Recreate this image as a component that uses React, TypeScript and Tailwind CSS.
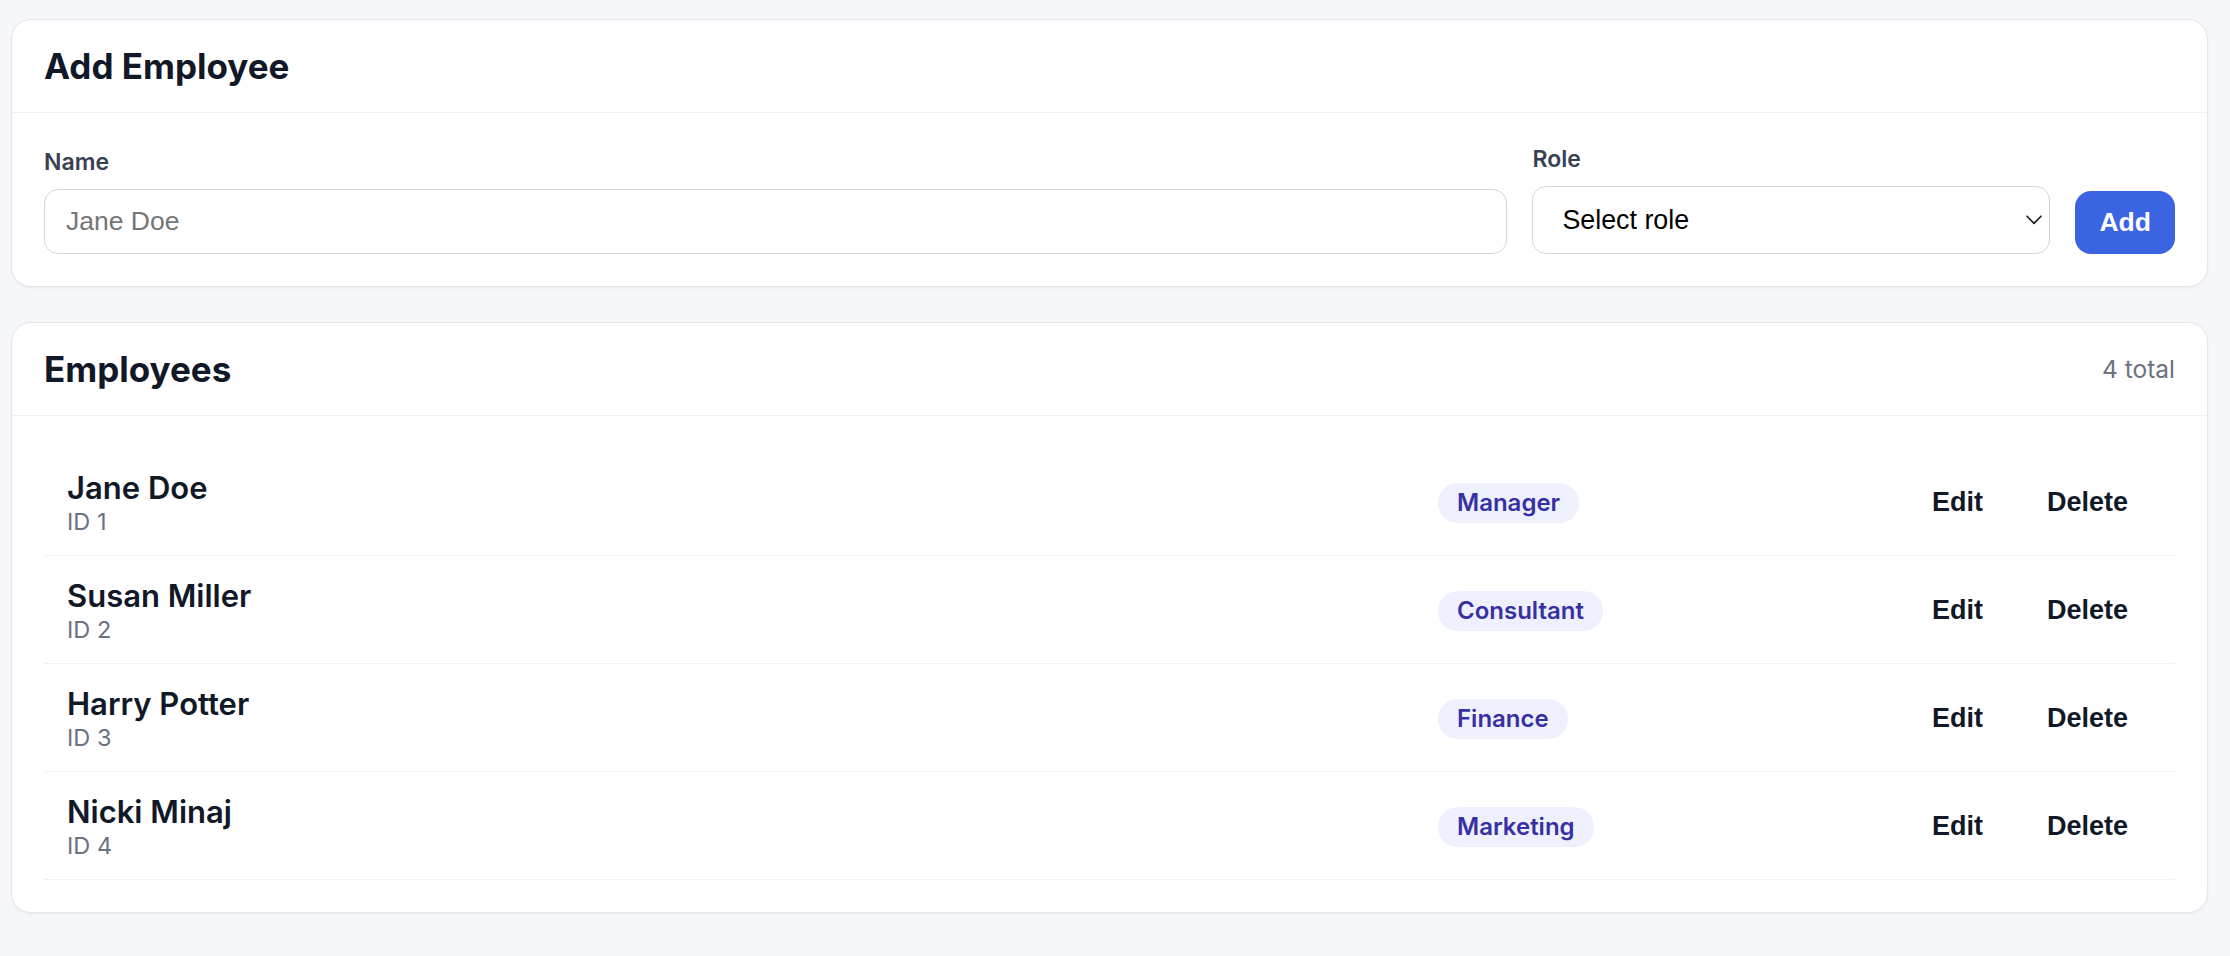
import React from 'react';

const employees = [
  { id: 1, name: 'Jane Doe', role: 'Manager' },
  { id: 2, name: 'Susan Miller', role: 'Consultant' },
  { id: 3, name: 'Harry Potter', role: 'Finance' },
  { id: 4, name: 'Nicki Minaj', role: 'Marketing' },
];

const App = () => {
  return (
    <div className="min-h-screen bg-[#f6f7fb] pl-[11px] pr-[22px] pt-[19px] pb-[40px] font-['Inter',sans-serif] text-[#111827]">
      {/* Add form */}
      <section className="rounded-[20px] border border-[#e4e6eb] bg-white shadow-[0_1px_3px_rgba(15,23,42,0.05)]">
        <div className="flex h-[93px] items-center border-b border-[#eef0f4] px-[32px]">
          <h1 className="text-[35px] font-bold leading-[40px]">Add Employee</h1>
        </div>
        <form className="flex items-end gap-[25px] px-[32px] pt-[30px] pb-[32px]" onSubmit={(e) => e.preventDefault()}>
          <label className="flex flex-1 flex-col">
            <span className="mb-[11px] text-[23px] font-semibold leading-[32px] text-[#374151]">Name</span>
            <input
              type="text"
              placeholder="Jane Doe"
              className="h-[65px] rounded-[14px] border border-[#d1d5db] bg-white px-[21px] font-['Liberation_Sans',Arial,sans-serif] text-[26.5px] text-black placeholder:text-[#757575] outline-none"
            />
          </label>
          <label className="flex w-[518px] flex-col">
            <span className="mb-[11px] text-[23px] font-semibold leading-[32px] text-[#374151]">Role</span>
            <div className="relative">
              <select
                defaultValue=""
                className="h-[68px] w-full appearance-none rounded-[14px] border border-[#d1d5db] bg-white pl-[29px] pr-[40px] font-['Liberation_Sans',Arial,sans-serif] text-[26.8px] text-black outline-none"
              >
                <option value="">Select role</option>
                <option>Manager</option>
                <option>Consultant</option>
                <option>Finance</option>
                <option>Marketing</option>
              </select>
              <svg
                className="pointer-events-none absolute right-[8px] top-[29px] h-[10px] w-[16px]"
                viewBox="0 0 16 10"
                fill="none"
              >
                <polyline points="1,1.2 8,8.4 15,1.2" stroke="#1c1c1c" strokeWidth="1.6" strokeLinecap="round" strokeLinejoin="round" />
              </svg>
            </div>
          </label>
          <button
            type="submit"
            className="h-[63px] rounded-[16px] bg-[#3b64e3] px-[24px] font-['Liberation_Sans',Arial,sans-serif] text-[26.5px] font-bold text-white"
          >
            Add
          </button>
        </form>
      </section>

      {/* List */}
      <section className="mt-[35px] rounded-[20px] border border-[#e4e6eb] bg-white shadow-[0_1px_3px_rgba(15,23,42,0.05)]">
        <div className="flex h-[93px] items-center justify-between border-b border-[#eef0f4] px-[32px]">
          <h2 className="text-[35px] font-bold leading-[40px]">Employees</h2>
          <span className="text-[24.5px] leading-[32px] text-[#6b7280]">{employees.length} total</span>
        </div>
        <ul className="px-[32px] pt-[32px] pb-[32px]">
          {employees.map((emp) => (
            <li
              key={emp.id}
              className="grid h-[108px] grid-cols-[1371px_1fr_auto] items-center border-b border-[#eef1f5] pl-[23px] pr-[24px] pt-[2px]"
            >
              <div className="flex flex-col">
                <span className="text-[31px] font-semibold leading-[38px] text-[#111827]">{emp.name}</span>
                <span className="text-[23.5px] leading-[30px] text-[#6b7280]">ID {emp.id}</span>
              </div>
              <div>
                <span className="inline-flex h-[40px] items-center rounded-full bg-[#eef0fd] px-[19px] text-[24px] font-semibold text-[#3730a3]">
                  {emp.role}
                </span>
              </div>
              <div className="flex items-center gap-[18px] font-['Liberation_Sans',Arial,sans-serif] text-[27px] font-bold text-[#111827]">
                <button type="button" className="px-[23px] py-[8px]">Edit</button>
                <button type="button" className="px-[23px] py-[8px]">Delete</button>
              </div>
            </li>
          ))}
        </ul>
      </section>
    </div>
  );
};

export default App;
